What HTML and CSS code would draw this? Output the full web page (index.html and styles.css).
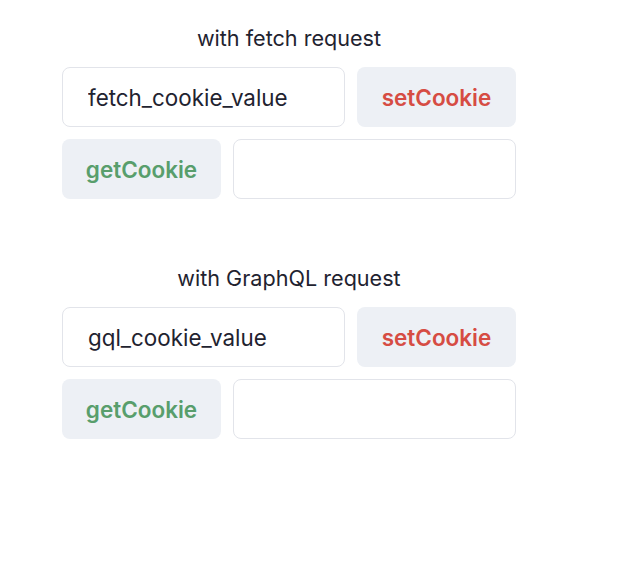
FILE: index.html
```html
<!DOCTYPE html>
<html>
<head>
<meta charset="utf-8">
<link rel="stylesheet" href="styles.css">
</head>
<body>
<main class="page">
  <section class="block">
    <h2 class="title">with fetch request</h2>
    <div class="row row-a">
      <input class="field" type="text" value="fetch_cookie_value">
      <button class="btn btn-set">setCookie</button>
    </div>
    <div class="row row-b">
      <button class="btn btn-get">getCookie</button>
      <input class="field" type="text" value="">
    </div>
  </section>
  <section class="block">
    <h2 class="title">with GraphQL request</h2>
    <div class="row row-a">
      <input class="field" type="text" value="gql_cookie_value">
      <button class="btn btn-set">setCookie</button>
    </div>
    <div class="row row-b">
      <button class="btn btn-get">getCookie</button>
      <input class="field" type="text" value="">
    </div>
  </section>
</main>
</body>
</html>
```
FILE: styles.css
```css
* { box-sizing: border-box; }
html, body { margin: 0; padding: 0; background: #fff; }
body { font-family: Inter, "Noto Sans", sans-serif; color: #1f2330; }
.page {
  width: 454px;
  margin-left: 62px;
  padding-top: 24px;
  display: flex;
  flex-direction: column;
  gap: 65px;
}
.block { display: flex; flex-direction: column; gap: 12px; }
.title {
  margin: 0 0 3px;
  font-size: 21.6px;
  font-weight: 400;
  line-height: 28px;
  text-align: center;
  color: #1f2330;
}
.row { display: grid; gap: 12px; height: 60px; }
.row-a { grid-template-columns: 283px 159px; }
.row-b { grid-template-columns: 159px 283px; }
.field {
  height: 60px;
  border: 1px solid #e2e4ea;
  border-radius: 8px;
  padding: 0 25px;
  font-family: inherit;
  font-size: 22.4px;
  color: #1f2330;
  background: #fff;
  outline: none;
}
.btn {
  height: 60px;
  border: none;
  border-radius: 8px;
  background: #edf0f5;
  font-family: inherit;
  font-size: 22.5px;
  font-weight: 600;
  padding: 0;
}
.btn-set { color: #d64c43; }
.btn-get { color: #589e6c; }
```
